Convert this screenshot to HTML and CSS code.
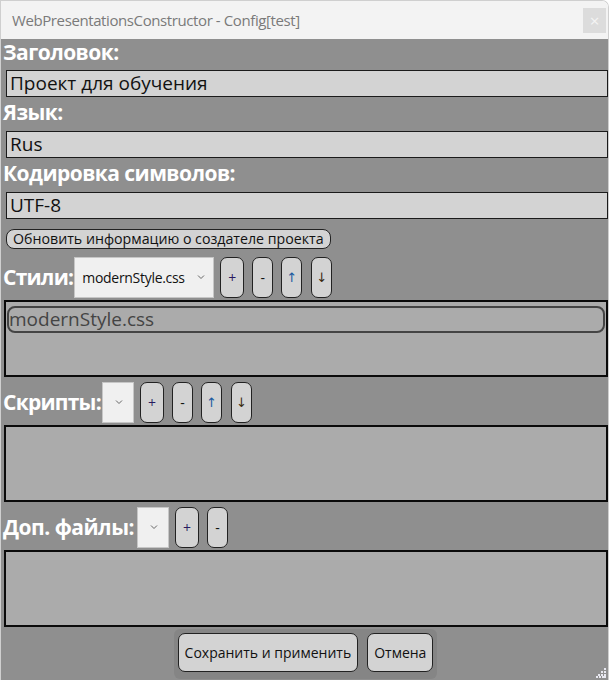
FILE: index.html
```html
<!DOCTYPE html>
<html lang="ru">
<head>
<meta charset="utf-8">
<title>Config</title>
<link rel="stylesheet" href="styles.css">
</head>
<body>
<div class="window">
  <div class="titlebar">
    <span class="title">WebPresentationsConstructor - Config[test]</span>
    <span class="close">×</span>
  </div>
  <div class="content">
    <div class="label l1">Заголовок:</div>
    <div class="field">Проект для обучения</div>
    <div class="label l2">Язык:</div>
    <div class="field">Rus</div>
    <div class="label l2">Кодировка символов:</div>
    <div class="field">UTF-8</div>
    <div class="update-row"><span class="pill">Обновить информацию о создателе проекта</span></div>

    <div class="tool-row">
      <span class="label">Стили:</span>
      <span class="select wide"><span class="sel-text">modernStyle.css</span><svg class="chev" width="8" height="6" viewBox="0 0 8 6"><path d="M1 1.5 L4 4.5 L7 1.5" fill="none" stroke="#666" stroke-width="1"/></svg></span>
      <span class="tbtn b1 plus">+</span>
      <span class="tbtn b2">-</span>
      <span class="tbtn b3 up">↑</span>
      <span class="tbtn b3 down">↓</span>
    </div>
    <div class="listbox">
      <div class="item">modernStyle.css</div>
    </div>

    <div class="tool-row">
      <span class="label">Скрипты:</span>
      <span class="select narrow"><svg class="chev" width="8" height="6" viewBox="0 0 8 6"><path d="M1 1.5 L4 4.5 L7 1.5" fill="none" stroke="#666" stroke-width="1"/></svg></span>
      <span class="tbtn b1 plus">+</span>
      <span class="tbtn b2">-</span>
      <span class="tbtn b3 up">↑</span>
      <span class="tbtn b3 down">↓</span>
    </div>
    <div class="listbox"></div>

    <div class="tool-row">
      <span class="label wider">Доп. файлы:</span>
      <span class="select narrow"><svg class="chev" width="8" height="6" viewBox="0 0 8 6"><path d="M1 1.5 L4 4.5 L7 1.5" fill="none" stroke="#666" stroke-width="1"/></svg></span>
      <span class="tbtn b1 plus">+</span>
      <span class="tbtn b2">-</span>
    </div>
    <div class="listbox"></div>

    <div class="footer">
      <div class="btn-group">
        <span class="fbtn">Сохранить и применить</span>
        <span class="fbtn">Отмена</span>
      </div>
      <svg class="grip" width="10" height="10" viewBox="0 0 10 10">
        <g fill="#e8e8f0">
          <rect x="8" y="0" width="2" height="2"/>
          <rect x="5" y="3" width="2" height="2"/><rect x="8" y="3" width="2" height="2"/>
          <rect x="2" y="6" width="2" height="2"/><rect x="5" y="6" width="2" height="2"/><rect x="8" y="6" width="2" height="2"/>
          <rect x="0" y="8" width="2" height="2"/><rect x="3" y="8" width="2" height="2"/><rect x="6" y="8" width="2" height="2"/><rect x="8" y="8" width="2" height="2"/>
        </g>
      </svg>
    </div>
  </div>
</div>
</body>
</html>
```
FILE: styles.css
```css
* { box-sizing: border-box; }
html, body { margin: 0; padding: 0; background: #ffffff; }
body { width: 610px; height: 680px; overflow: hidden; font-family: "Open Sans", "Noto Sans", sans-serif; }

.window {
  width: 609px;
  height: 680px;
  display: flex;
  flex-direction: column;
  border: 1px solid #cfcfcf;
  border-bottom: none;
  border-radius: 0 7px 0 0;
  overflow: hidden;
}

.titlebar {
  height: 38px;
  flex: none;
  background: #f3f3f3;
  display: flex;
  align-items: center;
  justify-content: space-between;
  padding: 0 2px 0 11px;
}
.title { font-size: 15px; color: #7a7a7a; letter-spacing: -0.4px; }
.close {
  width: 23px; height: 25px;
  background: #dcdcdc;
  color: #f4f4f4;
  font-size: 17px;
  display: flex; align-items: center; justify-content: center;
  margin-top: 1px;
}

.content {
  flex: 1;
  background: #8f8f8f;
  display: flex;
  flex-direction: column;
  padding-left: 2px;
  padding-right: 0;
}

.label {
  color: #ffffff;
  font-weight: 700;
  font-size: 21px;
  letter-spacing: -0.55px;
}
.l1 { height: 31px; line-height: 26px; }
.l2 { height: 34px; line-height: 31px; }

.field {
  height: 27px;
  margin-left: 3px;
  margin-right: 0;
  background: #d3d3d3;
  border: 1px solid #1a1a1a;
  font-size: 19px;
  line-height: 24px;
  padding-left: 3px;
  color: #111;
}

.update-row { padding-top: 8px; height: 33px; padding-left: 3px; }
.pill {
  display: inline-block;
  height: 20px;
  padding: 0 6px;
  border: 1px solid #222;
  border-radius: 8px;
  background: #d3d3d3;
  font-size: 14.2px;
  line-height: 17px;
  color: #111;
}

.tool-row {
  height: 48px;
  display: flex;
  align-items: center;
  padding-top: 2px;
}
.tool-row .label { margin-right: 1px; line-height: 30px; letter-spacing: -0.75px; }
.tool-row .label.wider { letter-spacing: -0.5px; margin-right: 3px; }
.select {
  height: 41px;
  background: #f0f0f0;
  border: 1px solid #c6c6c6;
  display: flex;
  align-items: center;
  justify-content: flex-end;
  margin-right: 6px;
  padding-right: 8px;
}
.select.wide { width: 140px; justify-content: space-between; padding-left: 7px; }
.select.narrow { width: 32px; padding-right: 10px; }
.sel-text { font-size: 14px; color: #111; letter-spacing: -0.3px; }
.chev { display: block; }

.tbtn {
  height: 41px;
  border: 1px solid #222;
  border-radius: 7px;
  background: #d3d3d3;
  display: flex;
  align-items: center;
  justify-content: center;
  font-size: 14px;
  color: #111;
  margin-right: 8px;
}
.b1 { width: 24px; }
.b2 { width: 21px; }
.b3 { width: 21px; margin-right: 9px; font-family: "DejaVu Sans", sans-serif; font-size: 13px; }
.plus { color: #2a1a60; }
.up { color: #1a5aa0; }
.down { color: #3a2a10; }

.listbox {
  height: 77px;
  margin-left: 1px;
  border: 2px solid #0a0a0a;
  background: #ababab;
  padding: 4px 1px 0 1px;
}
.item {
  height: 27px;
  border: 2px solid #444;
  border-radius: 8px;
  background: #ababab;
  font-size: 19px;
  line-height: 22px;
  color: #444;
  padding-left: 0;
}

.footer {
  flex: 1;
  position: relative;
  display: flex;
  justify-content: center;
  padding-top: 2px;
  padding-right: 2px;
}
.btn-group {
  background: #858585;
  border-radius: 6px;
  padding: 4px 4px 0 4px;
  display: flex;
  gap: 9px;
  height: 50px;
  margin-left: 2px;
}
.fbtn {
  height: 39px;
  border: 1px solid #222;
  border-radius: 7px;
  background: #d3d3d3;
  font-size: 14px;
  color: #111;
  display: flex;
  align-items: center;
  padding: 0 6px;
}
.grip { position: absolute; right: 2px; bottom: 2px; }
```
